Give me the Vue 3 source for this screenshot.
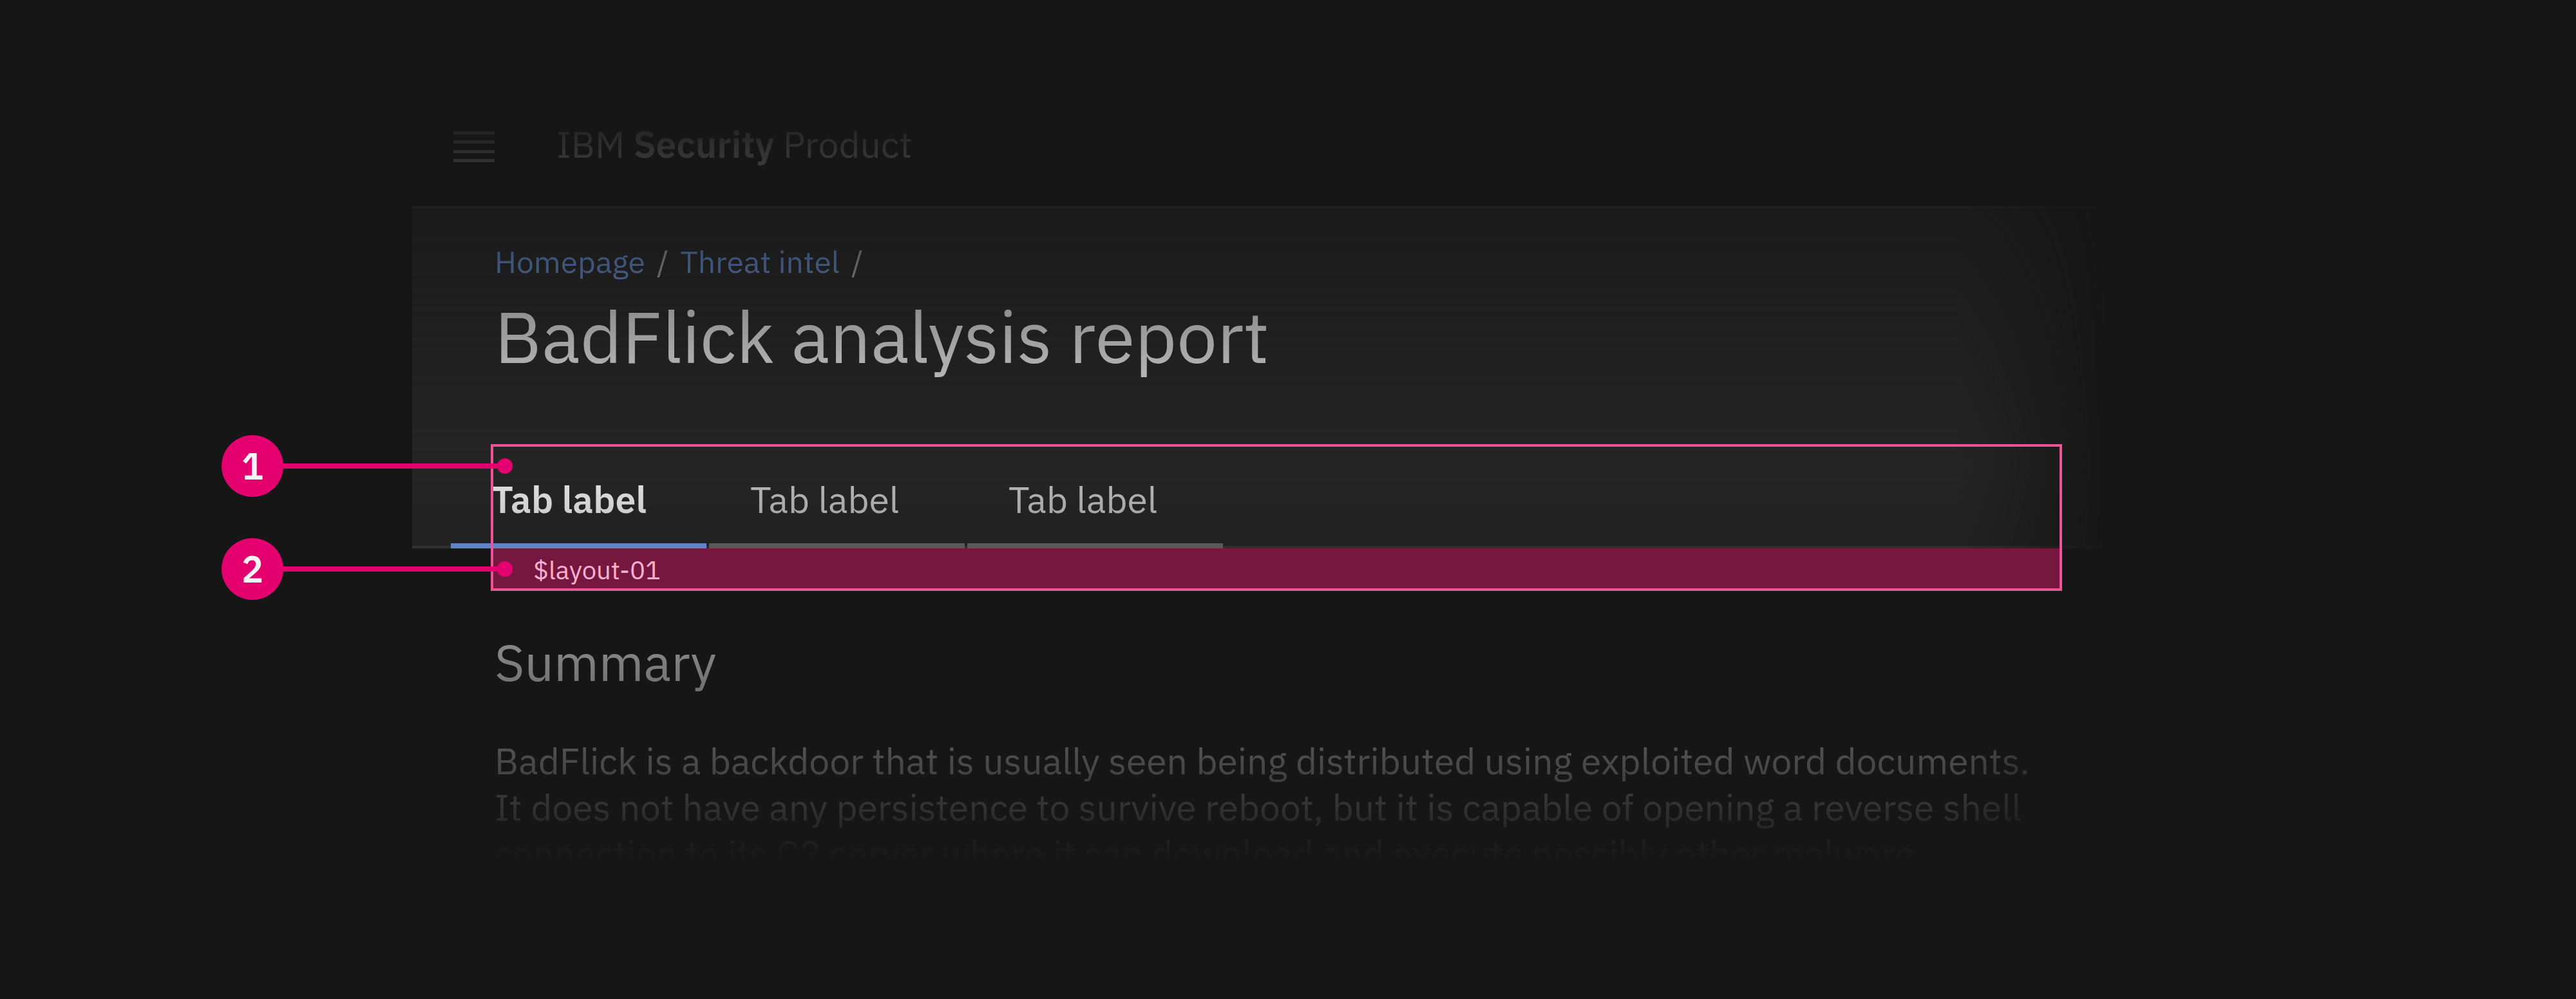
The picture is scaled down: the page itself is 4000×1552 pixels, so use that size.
<script setup>
const crumbs = ['Homepage', 'Threat intel']
const tabs = [
  { id: 1, label: 'Tab label', selected: true },
  { id: 2, label: 'Tab label', selected: false },
  { id: 3, label: 'Tab label', selected: false },
]
</script>

<template>
  <main class="stage">
    <div class="frame">
      <div class="product">
        <header class="masthead">
          <button class="menu" type="button" aria-label="Open menu">
            <svg viewBox="0 0 64 48" width="64" height="48" aria-hidden="true">
              <path d="M0 0h64v5H0zM0 14h64v5H0zM0 29h64v5H0zM0 43h64v5H0z" fill="currentColor" />
            </svg>
          </button>
          <span class="name">IBM <b>Security</b> Product</span>
        </header>

        <section class="page-header">
          <nav class="crumbs" aria-label="Breadcrumb">
            <template v-for="crumb in crumbs" :key="crumb">
              <a href="#">{{ crumb }}</a>
              <span class="slash">/</span>
            </template>
          </nav>
          <h1>BadFlick analysis report</h1>
          <div class="tabs" role="tablist">
            <button
              v-for="tab in tabs"
              :key="tab.id"
              class="tab"
              :class="{ selected: tab.selected }"
              type="button"
              role="tab"
              :aria-selected="tab.selected"
            >{{ tab.label }}</button>
          </div>
        </section>

        <section class="summary">
          <h2>Summary</h2>
          <p>
            BadFlick is a backdoor that is usually seen being distributed using exploited word documents.<br>
            It does not have any persistence to survive reboot, but it is capable of opening a reverse shell<br>
            connection to its C2 server where it can download and execute possibly other malware.
          </p>
        </section>
      </div>

      <div class="highlight">
        <div class="spacer">$layout-01</div>
      </div>
      <div class="marker first"><span class="number">1</span><i class="line"></i><i class="dot"></i></div>
      <div class="marker second"><span class="number">2</span><i class="line"></i><i class="dot"></i></div>
    </div>
  </main>
</template>

<style>
body {
  background: #161616;
}
</style>

<style scoped>
* {
  box-sizing: border-box;
}

.stage {
  padding: 160px 18% 160px 16%;
  background: #161616;
  color: #f4f4f4;
  font-family: "IBM Plex Sans", Roboto, "Liberation Sans", sans-serif;
  font-size: 57px;
}

.frame {
  position: relative;
}

.product {
  mask-image:
    linear-gradient(to bottom, transparent 0, rgb(0 0 0 / 0.95) 560px, transparent calc(100% - 26px)),
    linear-gradient(to right, #000 calc(100% - 240px), transparent calc(100% - 4px));
  mask-composite: intersect;
}

.masthead {
  display: flex;
  align-items: center;
  gap: 96px;
  height: 160px;
  padding: 0 64px 24px;
}

.menu {
  display: flex;
  padding: 0;
  border: 0;
  background: none;
  color: #c6c6c6;
}

.name {
  padding-bottom: 8px;
  line-height: 72px;
}

.name b {
  font-weight: 600;
}

.page-header {
  padding: 46px 60px 0;
  border-top: 4px solid #393939;
  background: #262626 linear-gradient(#393939, #393939) bottom / 100% 4px no-repeat;
}

.crumbs {
  display: flex;
  gap: 18px;
  padding-left: 68px;
  font-size: 48px;
  line-height: 72px;
}

.crumbs a {
  color: #78a9ff;
  text-decoration: none;
}

.slash {
  color: #c6c6c6;
}

h1 {
  margin: 8px 0 0;
  padding-left: 68px;
  font-size: 112px;
  font-weight: 400;
  line-height: 144px;
}

.tabs {
  display: flex;
  gap: 4px;
  margin-top: 98px;
}

.tab {
  width: 397px;
  height: 160px;
  padding: 16px 0 0 64px;
  border: 0;
  border-bottom: 8px solid #6f6f6f;
  background: none;
  color: #c6c6c6;
  font: inherit;
  text-align: left;
}

.tab.selected {
  border-color: #78a9ff;
  color: #f4f4f4;
  font-weight: 600;
}

.summary {
  padding: 124px 0 0 128px;
}

h2 {
  margin: 0;
  font-size: 80px;
  font-weight: 400;
  line-height: 104px;
}

p {
  margin: 66px 0 0;
  line-height: 72px;
  white-space: nowrap;
}

.highlight {
  position: absolute;
  top: 530px;
  right: 78px;
  left: 122px;
  display: flex;
  flex-direction: column;
  justify-content: flex-end;
  height: 228px;
  border: 4px solid #ee5396;
}

.spacer {
  height: 62px;
  padding-left: 62px;
  background: #75173f;
  color: #ffafd2;
  font-size: 40px;
  line-height: 66px;
}

.marker {
  position: absolute;
  left: -296px;
  display: flex;
  align-items: center;
}

.first {
  top: 516px;
}

.second {
  top: 676px;
}

.number {
  display: grid;
  place-items: center;
  width: 96px;
  height: 96px;
  border-radius: 50%;
  background: #e5006f;
  font-weight: 600;
}

.line {
  width: 336px;
  height: 8px;
  background: #e5006f;
}

.dot {
  width: 24px;
  height: 24px;
  margin-left: -4px;
  border-radius: 50%;
  background: #e5006f;
}
</style>
